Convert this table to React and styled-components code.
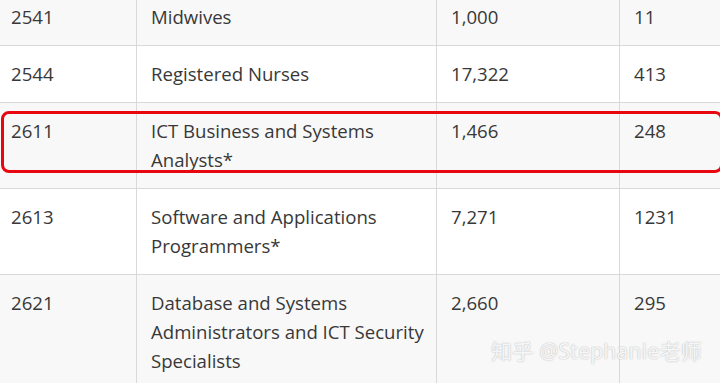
import React from 'react'
import styled, { createGlobalStyle } from 'styled-components'

const GlobalStyle = createGlobalStyle`
  html, body {
    margin: 0;
    padding: 0;
    background: #ffffff;
  }
  body {
    font-family: "Open Sans", "Noto Sans", sans-serif;
    color: #333333;
  }
`

const rows = [
  { code: '2541', name: 'Midwives', total: '1,000', count: '11' },
  { code: '2544', name: 'Registered Nurses', total: '17,322', count: '413' },
  { code: '2611', name: <>ICT Business and Systems<br />Analysts*</>, total: '1,466', count: '248' },
  { code: '2613', name: <>Software and Applications<br />Programmers*</>, total: '7,271', count: '1231' },
  { code: '2621', name: <>Database and Systems<br />Administrators and ICT Security<br />Specialists</>, total: '2,660', count: '295' },
]

const Page = styled.div`
  position: relative;
  width: 720px;
  height: 383px;
  overflow: hidden;
`

const Table = styled.table`
  border-collapse: collapse;
  margin: -12px 0 0 -4px;
  width: 740px;
  table-layout: fixed;
  font-size: 18.6px;
  line-height: 29px;
`

const Row = styled.tr`
  background: ${p => (p.$striped ? '#f8f8f8' : '#ffffff')};
`

const Cell = styled.td`
  box-sizing: border-box;
  border: 1px solid #d9d9d9;
  padding: 13px 14px 14px;
  vertical-align: top;
  width: ${p => p.$w}px;
  color: #383838;
  white-space: nowrap;
`

const Highlight = styled.div`
  position: absolute;
  left: 1px;
  top: 111px;
  width: 722px;
  height: 62px;
  border: 3px solid #e8060f;
  border-radius: 8px;
  box-sizing: border-box;
  pointer-events: none;
`

const Watermark = styled.div`
  position: absolute;
  right: 18px;
  bottom: 18px;
  font-family: "Open Sans", "Noto Sans CJK SC", sans-serif;
  font-size: 21px;
  letter-spacing: 0.3px;
  color: rgba(255, 255, 255, 0.9);
  text-shadow: 0 0 1px rgba(140, 140, 140, 0.55), 0 0 2px rgba(140, 140, 140, 0.3);
`

const widths = [140, 300, 183, 117]

export default function App() {
  return (
    <Page>
      <GlobalStyle />
      <Table>
        <tbody>
          {rows.map((r, i) => (
            <Row key={r.code} $striped={i % 2 === 0}>
              <Cell $w={widths[0]}>{r.code}</Cell>
              <Cell $w={widths[1]}>{r.name}</Cell>
              <Cell $w={widths[2]}>{r.total}</Cell>
              <Cell $w={widths[3]}>{r.count}</Cell>
            </Row>
          ))}
        </tbody>
      </Table>
      <Highlight />
      <Watermark>知乎 @Stephanie老师</Watermark>
    </Page>
  )
}
